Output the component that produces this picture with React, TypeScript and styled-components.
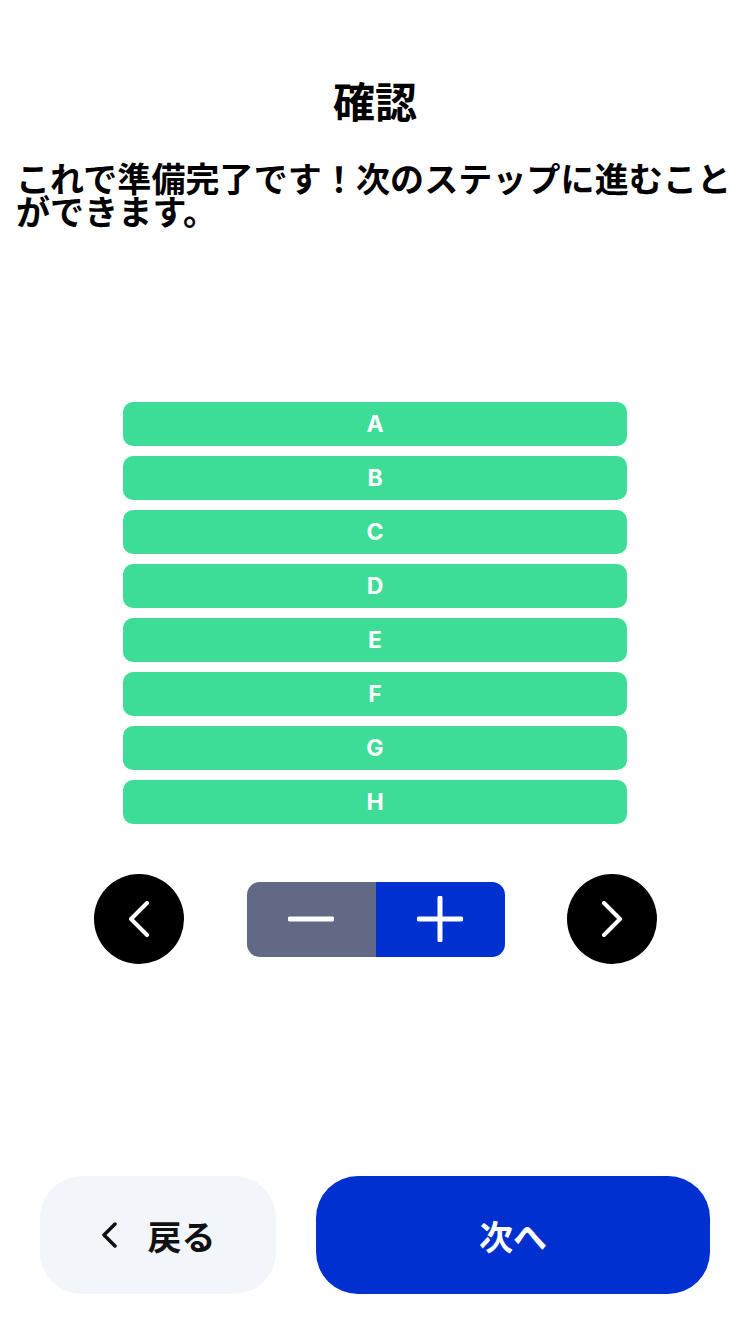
import React from "react";
import styled, { createGlobalStyle } from "styled-components";

const GlobalStyle = createGlobalStyle`
  html, body {
    margin: 0;
    padding: 0;
    background: #ffffff;
  }
  body {
    font-family: "Noto Sans CJK JP", "Noto Sans", sans-serif;
    color: #000000;
  }
  * { box-sizing: border-box; }
`;

const Page = styled.div`
  width: 750px;
  min-height: 1334px;
  display: flex;
  flex-direction: column;
  background: #ffffff;
`;

const Title = styled.h1`
  margin: 76px 0 0;
  font-size: 42px;
  line-height: 48px;
  font-weight: 700;
  text-align: center;
`;

const Subtitle = styled.p`
  margin: 37px 0 0;
  padding: 0 16px;
  font-size: 34px;
  line-height: 33px;
  font-weight: 700;
  letter-spacing: 0.1px;
`;

const List = styled.div`
  margin: 175px auto 0;
  width: 504px;
  display: flex;
  flex-direction: column;
  gap: 10px;
`;

const Bar = styled.div`
  height: 44px;
  border-radius: 10px;
  background: #3ddd97;
  color: #ffffff;
  display: flex;
  align-items: center;
  justify-content: center;
  font-family: Inter, "Noto Sans", sans-serif;
  font-weight: 700;
  font-size: 23px;
`;

const Controls = styled.div`
  margin-top: 50px;
  padding-left: 1px;
  display: flex;
  align-items: center;
  justify-content: center;
  gap: 62.5px;
`;

const RoundButton = styled.button`
  width: 90px;
  height: 90px;
  border-radius: 50%;
  border: none;
  padding: 0;
  background: #000000;
  display: flex;
  align-items: center;
  justify-content: center;
`;

const Stepper = styled.div`
  width: 258px;
  height: 75px;
  border-radius: 13px;
  overflow: hidden;
  display: flex;
`;

const StepButton = styled.button<{ $tone: "minus" | "plus" }>`
  flex: 1;
  border: none;
  padding: 0;
  background: ${(p) => (p.$tone === "minus" ? "#626985" : "#0031d0")};
  display: flex;
  align-items: center;
  justify-content: center;
`;

const Footer = styled.div`
  margin-top: auto;
  padding: 0 40px 40px;
  display: flex;
  gap: 40px;
`;

const BackButton = styled.button`
  width: 236px;
  height: 118px;
  border: none;
  border-radius: 42px;
  background: #f2f5fa;
  display: flex;
  align-items: center;
  justify-content: center;
  gap: 31px;
  font-family: "Noto Sans CJK JP", sans-serif;
  font-size: 34px;
  font-weight: 700;
  color: #111111;
  padding: 0;
`;

const NextButton = styled.button`
  flex: 1;
  height: 118px;
  border: none;
  border-radius: 42px;
  background: #0031d0;
  color: #ffffff;
  font-family: "Noto Sans CJK JP", sans-serif;
  font-size: 34px;
  font-weight: 700;
  display: flex;
  align-items: center;
  justify-content: center;
  padding: 0;
`;

const Chevron = ({ dir }: { dir: "left" | "right" }) => (
  <svg width="24" height="36" viewBox="0 0 24 36" fill="none">
    <polyline
      points={dir === "left" ? "20,2 4,18 20,34" : "4,2 20,18 4,34"}
      stroke="#ffffff"
      strokeWidth="4"
      strokeLinecap="round"
      strokeLinejoin="round"
    />
  </svg>
);

const MinusIcon = () => (
  <svg width="46" height="46" viewBox="0 0 46 46" fill="none">
    <line x1="2" y1="23" x2="44" y2="23" stroke="#ffffff" strokeWidth="5" strokeLinecap="round" />
  </svg>
);

const PlusIcon = () => (
  <svg width="46" height="46" viewBox="0 0 46 46" fill="none">
    <line x1="2" y1="23" x2="44" y2="23" stroke="#ffffff" strokeWidth="5" strokeLinecap="round" />
    <line x1="23" y1="2" x2="23" y2="44" stroke="#ffffff" strokeWidth="5" strokeLinecap="round" />
  </svg>
);

const BackChevron = () => (
  <svg width="16" height="26" viewBox="0 0 16 26" fill="none">
    <polyline points="14,2 3,13 14,24" stroke="#111111" strokeWidth="3.5" strokeLinecap="round" strokeLinejoin="round" />
  </svg>
);

const letters = ["A", "B", "C", "D", "E", "F", "G", "H"];

export default function App() {
  return (
    <>
      <GlobalStyle />
      <Page>
        <Title>確認</Title>
        <Subtitle>これで準備完了です！次のステップに進むことができます。</Subtitle>
        <List>
          {letters.map((l) => (
            <Bar key={l}>{l}</Bar>
          ))}
        </List>
        <Controls>
          <RoundButton aria-label="前へ">
            <Chevron dir="left" />
          </RoundButton>
          <Stepper>
            <StepButton $tone="minus" aria-label="減らす">
              <MinusIcon />
            </StepButton>
            <StepButton $tone="plus" aria-label="増やす">
              <PlusIcon />
            </StepButton>
          </Stepper>
          <RoundButton aria-label="次へ">
            <Chevron dir="right" />
          </RoundButton>
        </Controls>
        <Footer>
          <BackButton>
            <BackChevron />
            <span>戻る</span>
          </BackButton>
          <NextButton>次へ</NextButton>
        </Footer>
      </Page>
    </>
  );
}
